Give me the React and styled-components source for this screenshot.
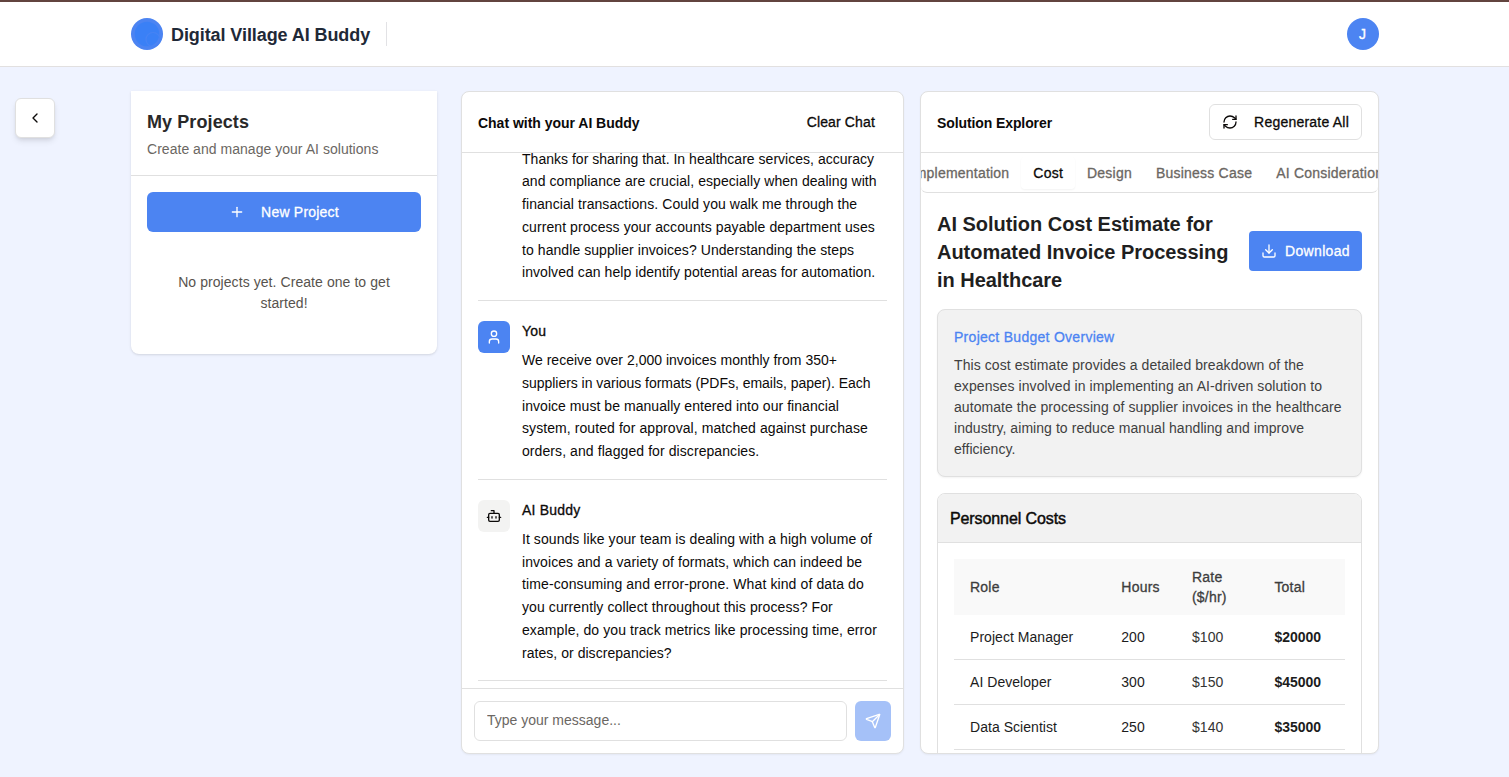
import React from "react";
import styled, { createGlobalStyle, css } from "styled-components";
import { ChevronLeft, Plus, RefreshCw, User, Bot, Download, Send } from "lucide-react";

const Global = createGlobalStyle`
  *, *::before, *::after { box-sizing: border-box; }
  body { margin: 0; background: #eff3ff; font-family: "Liberation Sans", Helvetica, Arial, sans-serif; font-size: 14px; line-height: 20px; color: #0c0a09; overflow: hidden; }
  h1, h2, h3, p { margin: 0; }
  button, input { font: inherit; color: inherit; }
`;
const medium = css`-webkit-text-stroke: 0.3px currentColor; letter-spacing: 0.22px;`;

const Page = styled.div`display: flex; flex-direction: column; height: 777px;`;
const Header = styled.header`
  display: flex; justify-content: center; height: 67px; background: #fff;
  border-top: 2px solid #62443f; border-bottom: 1px solid #e2e0e0;
`;
const HeaderInner = styled.div`display: flex; align-items: center; justify-content: space-between; width: 1248px;`;
const Brand = styled.div`display: flex; align-items: center;`;
const BrandName = styled.span`
  margin-left: 8px; border-right: 1px solid #e2e2e5; height: 24px; padding: 1px 0 0 0.5px;
  font-size: 18px; line-height: 24px; font-weight: 700; color: #1f2937; white-space: nowrap; width: 216px;
  letter-spacing: -0.08px;
`;
const UserBadge = styled.div`
  display: grid; place-items: center; width: 32px; height: 32px; border-radius: 50%;
  background: #4c84f2; color: #fff; ${medium}
`;
const Main = styled.main`display: flex; align-items: flex-start; flex: 1; padding: 24px 0 23px 15px;`;
const Collapse = styled.button`
  display: grid; place-items: center; width: 40px; height: 40px; margin-top: 7px; padding: 0;
  background: #fff; border: 1px solid #e0e0e0; border-radius: 6px;
  box-shadow: 0 4px 6px -1px rgba(0,0,0,.1), 0 2px 4px -2px rgba(0,0,0,.1);
`;
const Projects = styled.aside`
  width: 306px; height: 263px; margin-left: 76px; background: #fff; border-radius: 0 0 8px 8px;
  box-shadow: 0 1px 3px rgba(0,0,0,.1), 0 1px 2px -1px rgba(0,0,0,.1);
`;
const ProjectsHead = styled.div`height: 85px; padding: 17px 16px 0; border-bottom: 1px solid #e0e0e0;`;
const ProjectsTitle = styled.h2`font-size: 18px; line-height: 28px; color: #292929; letter-spacing: 0.09px;`;
const Muted = styled.p`line-height: 20px; margin-top: 3px; color: #6b6763; white-space: nowrap; letter-spacing: 0.03px;`;
const NewProject = styled.button`
  display: flex; align-items: center; justify-content: center; gap: 16px; width: 274px; height: 40px;
  margin: 16px 16px 0; border: 0; border-radius: 6px; background: #4c84f2; color: #fff; ${medium}
`;
const Empty = styled.p`margin: 40px 44px 0; text-align: center; line-height: 21px; color: #57534e; letter-spacing: 0.07px;`;
const Panel = styled.section`
  display: flex; flex-direction: column; width: ${p => p.$w}px; height: 663px; margin-left: ${p => p.$gap}px;
  background: #fff; border: 1px solid #e0e0e0; border-radius: 8px; overflow: hidden;
  box-shadow: 0 1px 2px rgba(0,0,0,.05);
`;
const PanelHead = styled.div`
  display: flex; align-items: center; justify-content: space-between; flex: none; height: 61px;
  padding: 0 16px; border-bottom: 1px solid #e0e0e0;
`;
const PanelTitle = styled.h3`font-size: 14px; line-height: 20px; padding-top: 2px; letter-spacing: ${p => p.$ls || 0}px;`;
const GhostButton = styled.button`border: 0; background: none; padding: 0 12px; ${medium} letter-spacing: 0.14px;`;
const OutlineButton = styled.button`
  display: flex; align-items: center; gap: 16px; height: 36px; padding: 0 12px; white-space: nowrap;
  border: 1px solid #e0e0e0; border-radius: 6px; background: #fff; ${medium}
`;
const Messages = styled.div`
  display: flex; flex-direction: column; justify-content: flex-end; flex: 1; min-height: 0; overflow: hidden;
  padding: 0 16px 6.55px;
`;
const Message = styled.article`
  display: flex; flex: none; gap: 12px; border-bottom: 1px solid #e0e0e0;
  padding: ${p => (p.$continued ? "0 0 16px 44px" : "20px 0 16px")};
`;
const Avatar = styled.div`
  display: grid; place-items: center; flex: none; width: 32px; height: 32px; border-radius: 6px;
  background: ${p => (p.$user ? "#4c84f2" : "#f3f3f2")}; color: ${p => (p.$user ? "#fff" : "#0c0a09")};
`;
const Author = styled.div`height: 20px; margin-bottom: 8px; ${medium}`;
const Body = styled.p`line-height: 22.75px; white-space: nowrap;`;
const Line = styled.span`display: block; letter-spacing: ${p => p.$ls || 0}px;`;
const Composer = styled.div`display: flex; gap: 8px; flex: none; height: 65px; padding: 12px; border-top: 1px solid #e0e0e0;`;
const Input = styled.input`
  flex: 1; height: 40px; min-width: 0; padding: 0 12px 2px; border: 1px solid #e0e0e0; border-radius: 6px;
  &::placeholder { color: #6b6763; opacity: 1; }
`;
const SendButton = styled.button`
  display: grid; place-items: center; width: 36px; height: 40px; padding: 0; border: 0; border-radius: 6px;
  background: #a5c1f8; color: #fff;
`;
const Tabs = styled.div`
  display: flex; flex: none; align-items: center; justify-content: center; height: 40px; padding-left: 2px;
  border-bottom: 1px solid #e0e0e0; border-radius: 0 0 6px 6px; overflow: hidden;
`;
const Tab = styled.div`
  flex: none; height: 32px; padding: 0 12px; line-height: 32px; border-radius: 4px; white-space: nowrap; ${medium}
  color: ${p => (p.$on ? "#0c0a09" : "#6b6763")};
  box-shadow: ${p => (p.$on ? "0 1px 2px rgba(0,0,0,.05)" : "none")};
`;
const Content = styled.div`flex: 1; min-height: 0; overflow: hidden; padding: 17px 16px 0;`;
const TitleRow = styled.div`display: flex; align-items: center; justify-content: space-between; height: 84px; margin-bottom: 15px;`;
const Title = styled.h2`font-size: 20px; line-height: 28px; color: #1f1f1f; white-space: nowrap; letter-spacing: -0.03px;`;
const DownloadButton = styled.button`
  display: flex; align-items: center; gap: 8px; height: 40px; padding: 0 12px; margin-top: -2px;
  border: 0; border-radius: 4px; background: #4c84f2; color: #fff; ${medium} letter-spacing: 0.34px;
`;
const Overview = styled.div`
  height: 168px; padding: 15px 16px; border: 1px solid #e0e0e0; border-radius: 8px; background: #f2f2f2;
  box-shadow: 0 1px 2px rgba(0,0,0,.05);
`;
const OverviewTitle = styled.div`line-height: 24px; margin-bottom: 6px; color: #4c84f2; ${medium} letter-spacing: 0.28px;`;
const OverviewText = styled.p`line-height: 21px; color: #404040; white-space: nowrap;`;
const Costs = styled.div`margin-top: 16px; height: 400px; border: 1px solid #e0e0e0; border-radius: 8px; overflow: hidden;`;
const CostsHead = styled.div`
  height: 49px; padding: 1px 12px 0; line-height: 48px; font-size: 16px; background: #f2f2f2;
  border-bottom: 1px solid #e0e0e0; ${medium} -webkit-text-stroke-width: 0.45px; letter-spacing: -0.1px;
`;
const Table = styled.div`margin: 16px;`;
const Row = styled.div`
  display: grid; grid-template-columns: 151.3px 70.7px 82.4px 1fr; align-items: center;
  height: 45px; padding-left: 16px; letter-spacing: 0.04px;
  background: #fff; border-bottom: 1px solid #e0e0e0; color: #1c1c1c;
`;
const HeadRow = styled(Row)`height: 56px; background: #f9f9f9; border-bottom: 0; color: #3d3d3d; ${medium}`;
const Soft = styled.span`color: #333;`;
const Total = styled.b`letter-spacing: 0;`;

const Logo = () => (
  <svg width="32" height="32" viewBox="0 0 32 32">
    <circle cx="16" cy="16" r="16" fill="#4c84f2" />
    <circle cx="16" cy="16" r="12.3" fill="#3a80f6" />
    <circle cx="22" cy="21.5" r="7" fill="none" stroke="#4783f4" strokeWidth="1.2" />
  </svg>
);

const messages = [
  { continued: true, lines: [["Thanks for sharing that. In healthcare services, accuracy", .02], ["and compliance are crucial, especially when dealing with", .065], ["financial transactions. Could you walk me through the", .07], ["current process your accounts payable department uses", .08], ["to handle supplier invoices? Understanding the steps", .07], ["involved can help identify potential areas for automation.", .065]] },
  { user: true, lines: [["We receive over 2,000 invoices monthly from 350+", .01], ["suppliers in various formats (PDFs, emails, paper). Each", -.03], ["invoice must be manually entered into our financial", .05], ["system, routed for approval, matched against purchase", .08], ["orders, and flagged for discrepancies.", .08]] },
  { lines: [["It sounds like your team is dealing with a high volume of", .065], ["invoices and a variety of formats, which can indeed be", .075], ["time-consuming and error-prone. What kind of data do", .11], ["you currently collect throughout this process? For", .1], ["example, do you track metrics like processing time, error", .085], ["rates, or discrepancies?", .04]] },
];
const overview = [["This cost estimate provides a detailed breakdown of the", .08], ["expenses involved in implementing an AI-driven solution to", .08], ["automate the processing of supplier invoices in the healthcare", .065], ["industry, aiming to reduce manual handling and improve", .06], ["efficiency.", .04]];
const rows = [["Project Manager", "200", "$100", "$20000"], ["AI Developer", "300", "$150", "$45000"], ["Data Scientist", "250", "$140", "$35000"]];
const tabs = ["Implementation", "Cost", "Design", "Business Case", "AI Considerations"];

const Lines = ({ items }) => items.map(([text, ls]) => <Line key={text} $ls={ls}>{text}</Line>);

export default function App() {
  return (
    <Page>
      <Global />
      <Header>
        <HeaderInner>
          <Brand><Logo /><BrandName>Digital Village AI Buddy</BrandName></Brand>
          <UserBadge>J</UserBadge>
        </HeaderInner>
      </Header>
      <Main>
        <Collapse><ChevronLeft size={16} /></Collapse>
        <Projects>
          <ProjectsHead>
            <ProjectsTitle>My Projects</ProjectsTitle>
            <Muted>Create and manage your AI solutions</Muted>
          </ProjectsHead>
          <NewProject><Plus size={16} strokeWidth={2} />New Project</NewProject>
          <Empty>No projects yet. Create one to get started!</Empty>
        </Projects>
        <Panel $w={443} $gap={24}>
          <PanelHead><PanelTitle $ls={-0.02}>Chat with your AI Buddy</PanelTitle><GhostButton>Clear Chat</GhostButton></PanelHead>
          <Messages>
            {messages.map((m, i) => (
              <Message key={i} $continued={m.continued}>
                {!m.continued && <Avatar $user={m.user}>{m.user ? <User size={16} /> : <Bot size={16} />}</Avatar>}
                <div>
                  {!m.continued && <Author>{m.user ? "You" : "AI Buddy"}</Author>}
                  <Body><Lines items={m.lines} /></Body>
                </div>
              </Message>
            ))}
          </Messages>
          <Composer><Input placeholder="Type your message..." /><SendButton><Send size={16} /></SendButton></Composer>
        </Panel>
        <Panel $w={459} $gap={16}>
          <PanelHead><PanelTitle $ls={-0.1}>Solution Explorer</PanelTitle><OutlineButton><RefreshCw size={16} />Regenerate All</OutlineButton></PanelHead>
          <Tabs>{tabs.map(t => <Tab key={t} $on={t === "Cost"}>{t}</Tab>)}</Tabs>
          <Content>
            <TitleRow>
              <Title>AI Solution Cost Estimate for<br />Automated Invoice Processing<br />in Healthcare</Title>
              <DownloadButton><Download size={16} />Download</DownloadButton>
            </TitleRow>
            <Overview>
              <OverviewTitle>Project Budget Overview</OverviewTitle>
              <OverviewText><Lines items={overview} /></OverviewText>
            </Overview>
            <Costs>
              <CostsHead>Personnel Costs</CostsHead>
              <Table>
                <HeadRow><span>Role</span><span>Hours</span><span>Rate<br />($/hr)</span><span>Total</span></HeadRow>
                {rows.map(r => <Row key={r[0]}><span>{r[0]}</span><span>{r[1]}</span><Soft>{r[2]}</Soft><Total>{r[3]}</Total></Row>)}
              </Table>
            </Costs>
          </Content>
        </Panel>
      </Main>
    </Page>
  );
}
